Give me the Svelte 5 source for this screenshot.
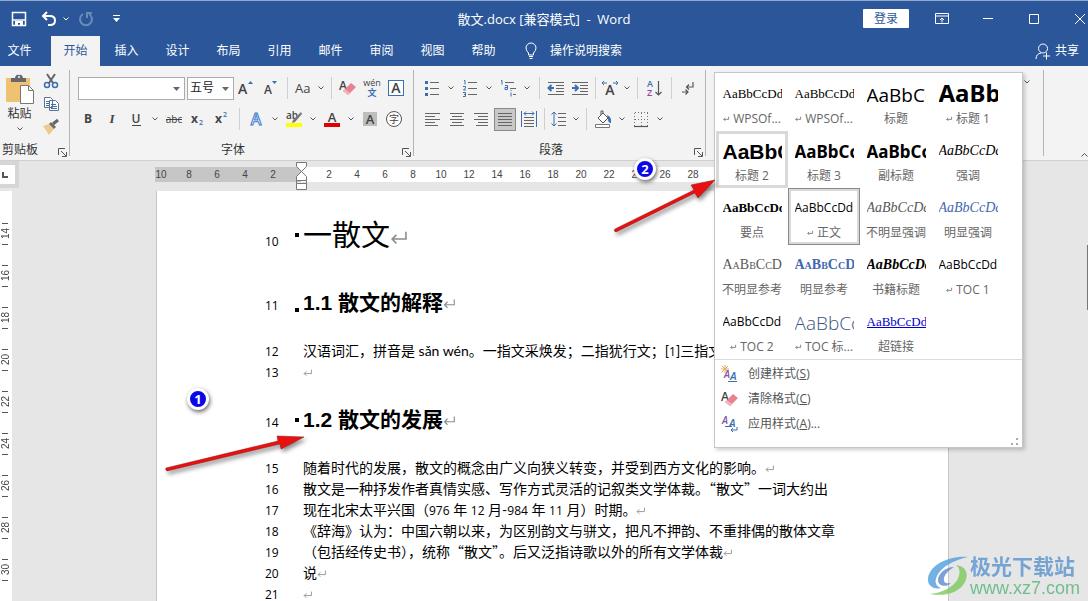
<script lang="ts">
	const tabs = ['文件', '开始', '插入', '设计', '布局', '引用', '邮件', '审阅', '视图', '帮助'];
	let activeTab = $state('开始');

	// 'v' is a drop-down arrow, 'w' a narrow one, '|' and '!' are wide and narrow dividers
	const fontTop = ['grow', 'shrink', '|', 'case', 'w', '|', 'clear', 'pinyin', 'boxed'];
	const fontBottom = ['bold', 'italic', 'underline', 'v', 'strike', 'sub', 'sup', '|', 'effects', 'v', 'highlight', 'v', 'color', 'v', 'shade', 'circled'];
	const paraTop = ['bullets', 'v', 'numbers', 'v', 'levels', 'v', '|', 'outdent', 'indent', '!', 'asian', 'w', '|', 'sort', '|', 'marks'];
	const paraBottom = ['left', 'center', 'right', 'justify', 'spread', '!', 'spacing', 'w', '|', 'fill', 'v', 'borders', 'v'];

	const titles: Record<string, string> = {
		grow: '增大字号', shrink: '减小字号', case: '更改大小写', clear: '清除格式', pinyin: '拼音指南', boxed: '字符边框',
		bold: '加粗', italic: '倾斜', underline: '下划线', strike: '删除线', sub: '下标', sup: '上标', effects: '文本效果',
		highlight: '突出显示', color: '字体颜色', shade: '字符底纹', circled: '带圈字符', bullets: '项目符号', numbers: '编号',
		levels: '多级列表', outdent: '减少缩进', indent: '增加缩进', asian: '中文版式', sort: '排序', marks: '显示编辑标记',
		left: '左对齐', center: '居中', right: '右对齐', justify: '两端对齐', spread: '分散对齐', spacing: '行距', fill: '底纹', borders: '边框',
	};

	const rulerLeft = [10, 8, 6, 4, 2];
	const rulerRight = [2, 4, 6, 8, 10, 12, 14, 16, 18, 20, 22, 24, 26, 28];
	const rulerSide = [14, 16, 18, 20, 22, 24, 26, 28, 30];

	const styles = [
		{ name: 'WPSOf...', look: 'serif', mark: true },
		{ name: 'WPSOf...', look: 'serif', mark: true },
		{ name: '标题', look: 'large' },
		{ name: '标题 1', look: 'h1', mark: true },
		{ name: '标题 2', look: 'h2', hover: true },
		{ name: '标题 3', look: 'h3' },
		{ name: '副标题', look: 'h3' },
		{ name: '强调', look: 'em' },
		{ name: '要点', look: 'strong' },
		{ name: '正文', look: 'plain', mark: true, current: true },
		{ name: '不明显强调', look: 'em soft' },
		{ name: '明显强调', look: 'em blue' },
		{ name: '不明显参考', look: 'caps soft' },
		{ name: '明显参考', look: 'caps strong blue' },
		{ name: '书籍标题', look: 'em heavy' },
		{ name: 'TOC 1', look: 'plain', mark: true },
		{ name: 'TOC 2', look: 'plain', mark: true },
		{ name: 'TOC 标...', look: 'large toc', mark: true },
		{ name: '超链接', look: 'serif link' },
	];

	const lines = [
		{ n: 10, kind: 'title', text: '一散文', mark: true },
		{ n: 11, kind: 'head low', text: '1.1 散文的解释', mark: true },
		{ n: 12, kind: 'body first', text: '汉语词汇，拼音是 sǎn wén。一指文采焕发；二指犹行文；[1]三指文', mark: false },
		{ n: 13, kind: 'body', text: '', mark: true },
		{ n: 14, kind: 'head next', text: '1.2 散文的发展', mark: true },
		{ n: 15, kind: 'body first', text: '随着时代的发展，散文的概念由广义向狭义转变，并受到西方文化的影响。', mark: true },
		{ n: 16, kind: 'body', text: '散文是一种抒发作者真情实感、写作方式灵活的记叙类文学体裁。“散文”一词大约出', mark: false },
		{ n: 17, kind: 'body', text: '现在北宋太平兴国（976 年 12 月-984 年 11 月）时期。', mark: true },
		{ n: 18, kind: 'body', text: '《辞海》认为：中国六朝以来，为区别韵文与骈文，把凡不押韵、不重排偶的散体文章', mark: false },
		{ n: 19, kind: 'body', text: '（包括经传史书），统称“散文”。后又泛指诗歌以外的所有文学体裁', mark: true },
		{ n: 20, kind: 'body', text: '说', mark: true },
		{ n: 21, kind: 'body', text: '', mark: true },
	];

	// digits and quotes are set in their own faces; they land on the odd indexes
	const runs = (text: string) => text.split(/([0-9]+|[“”])/);
</script>

{#snippet ret()}
	<svg class="ret" viewBox="0 0 16 14" aria-hidden="true"><path d="M15 1v7H2M6 4 2 8l4 4" /></svg>
{/snippet}

{#snippet chev()}
	<svg class="chev" width="6" height="4" viewBox="0 0 6 4" aria-hidden="true"><path d="M.5.5 3 3 5.5.5" /></svg>
{/snippet}

{#snippet eraser()}
	<text x="0" y="11" class="ui semi" font-size="12">A</text>
	<path d="m4 12 8-8 5 4-8 8z" fill="#e6818f" />
	<path d="m4 12 2-2 5 4-2 2z" fill="#f3b3bb" />
{/snippet}

{#snippet launcher(label: string)}
	<button class="launcher" title={label} aria-label={label}>
		<svg width="9" height="9" viewBox="0 0 9 9"><path d="M.5 7V.5H7M3 3l5 5M8.500 4v4.500H4" fill="none" stroke="#555" /></svg>
	</button>
{/snippet}

{#snippet glyph(name: string)}
	<svg width="18" height="18" viewBox="0 0 18 18" aria-hidden="true">
		{#if name === 'grow'}
			<text x="1" y="15" class="ui semi" font-size="14">A</text><path d="m11 5 2.500-3L16 5z" fill="#3b6fb0" />
		{:else if name === 'shrink'}
			<text x="3" y="15" class="ui semi" font-size="12">A</text><path d="m11 2 2.500 3L16 2z" fill="#3b6fb0" />
		{:else if name === 'case'}
			<text x="0" y="14" class="ui" font-size="13">Aa</text>
		{:else if name === 'clear'}
			{@render eraser()}
		{:else if name === 'pinyin'}
			<text x="9" y="7" class="ui" font-size="9" text-anchor="middle">wén</text>
			<text x="9" y="17" class="blue-ink" font-size="9" text-anchor="middle">文</text>
		{:else if name === 'boxed'}
			<rect x="1.500" y="1.500" width="15" height="15" fill="#fff" stroke="#3b6fb0" /><text x="9" y="14" class="ui semi" font-size="14" text-anchor="middle">A</text>
		{:else if name === 'bold'}
			<text x="9" y="13" class="ui heavy" font-size="12" text-anchor="middle">B</text>
		{:else if name === 'italic'}
			<text x="9" y="13" class="slant" font-size="13" text-anchor="middle">I</text>
		{:else if name === 'underline'}
			<text x="9" y="13" class="ui semi" font-size="12" text-anchor="middle">U</text><path d="M5 15.500h9" stroke="#444" />
		{:else if name === 'strike'}
			<text x="9" y="13" class="ui" font-size="10" text-anchor="middle">abc</text><path d="M1 9.500h16" stroke="#444" />
		{:else if name === 'sub'}
			<text x="2" y="13" class="ui heavy" font-size="12">x</text><text x="10" y="15" class="blue-ink" font-size="7">2</text>
		{:else if name === 'sup'}
			<text x="2" y="13" class="ui heavy" font-size="12">x</text><text x="10" y="7" class="blue-ink" font-size="7">2</text>
		{:else if name === 'effects'}
			<text x="9" y="15" font-size="16" text-anchor="middle" class="glow">A</text>
		{:else if name === 'highlight'}
			<text x="1" y="9" class="ui semi" font-size="10">ab</text>
			<path d="m16 2 1 2-7 8-3 1 1-3z" fill="#777" /><path d="M1 13h16v4H1z" fill="#ff0" />
		{:else if name === 'color'}
			<text x="9" y="12" class="ui semi" font-size="13" text-anchor="middle">A</text><path d="M1 13h16v4H1z" fill="#e00000" />
		{:else if name === 'shade'}
			<path d="M2 2h14v14H2z" fill="#bdbdbd" /><text x="9" y="14" class="ui semi" font-size="13" text-anchor="middle">A</text>
		{:else if name === 'circled'}
			<circle cx="9" cy="9" r="7.500" fill="#fff" stroke="#555" /><text x="9" y="13" class="ui" font-size="10" text-anchor="middle">字</text>
		{:else if name === 'bullets'}
			<path d="M2 2h3v3H2zM2 8h3v3H2zM2 14h3v3H2z" fill="#3b6fb0" /><path d="M7 3.500h9M7 9.500h9M7 15.500h9" class="bar" />
		{:else if name === 'numbers'}
			<path d="M3 1.500h1v4M2 7.500h2.500v1.500l-2 2H5M2 13.500h2.500v4H2M3 15.500h1.500" class="blue" /><path d="M7 3.500h9M7 9.500h9M7 15.500h9" class="bar" />
		{:else if name === 'levels'}
			<path d="M2 1.500h1v4M6 6.500h2.500v4H6v-2h2M12 11v1M12 13.500v4" class="blue" /><path d="M6 3.500h9M11 9.500h6M14 15.500h3" class="bar" />
		{:else if name === 'outdent' || name === 'indent'}
			<path d="M1 3.500h16M9 6.500h8M9 9.500h8M9 12.500h8M1 15.500h16" class="bar" />
			{#if name === 'outdent'}
				<path d="M7 9H2M4.500 6 1.500 9l3 3" class="blue thick" />
			{:else}
				<path d="M1 9h5M4 6l3 3-3 3" class="blue thick" />
			{/if}
		{:else if name === 'asian'}
			<text x="9" y="16" class="ui semi" font-size="14" text-anchor="middle">A</text><path d="M6 4H1M3 2 1 4l2 2M12 4h5M15 2l2 2-2 2" class="blue" />
		{:else if name === 'sort'}
			<text x="2" y="8" class="blue-ink" font-size="9">A</text><text x="2" y="17" class="violet" font-size="9">Z</text><path d="M13.500 2v14M10.500 13l3 3 3-3" class="dark" />
		{:else if name === 'marks'}
			<path d="M14 3v5H8M10 5.500 7.500 8l2.500 2.500M3 13h6M6.500 10.500 9 13l-2.500 2.500" class="dark" />
		{:else if name === 'left'}
			<path d="M1 3.500h15M1 6.500h10M1 9.500h15M1 12.500h10M1 15.500h13" class="bar" />
		{:else if name === 'center'}
			<path d="M2 3.500h14M4 6.500h10M2 9.500h14M4 12.500h10M2 15.500h14" class="bar" />
		{:else if name === 'right'}
			<path d="M2 3.500h14M6 6.500h10M2 9.500h14M6 12.500h10M4 15.500h12" class="bar" />
		{:else if name === 'justify'}
			<path d="M2 3.500h14M2 6.500h14M2 9.500h14M2 12.500h14M2 15.500h14" class="bar" />
		{:else if name === 'spread'}
			<path d="M1.500 1v16M16.500 1v16" class="blue" /><path d="M4 7.500h10M4 10.500h10M4 13.500h10M4 16.500h10" class="bar" /><path d="M4 3.500h10M6 1.500l-2 2 2 2M12 1.500l2 2-2 2" class="blue" />
		{:else if name === 'spacing'}
			<path d="M4 2v14M1.500 4.500 4 2l2.500 2.500M1.500 13.500 4 16l2.500-2.500" class="blue" /><path d="M8 3.500h8M8 7.500h8M8 11.500h8M8 15.500h8" class="bar" />
		{:else if name === 'fill'}
			<path d="m4 8 5-5 5 5-5 5zM9 3V1H7v4" fill="#fff" stroke="#555" /><path d="M13 5q5 2 4 8-3 0-3-4z" fill="#3b6fb0" /><path d="M1.500 14.500h14v3h-14z" fill="#fff" stroke="#777" />
		{:else if name === 'borders'}
			<path d="M2.500 3v13M9.500 3v13M15.500 3v13M3 2.500h13M3 9.500h13" stroke="#777" stroke-dasharray="1 2" /><path d="M2 16.500h14" class="dark" />
		{/if}
	</svg>
{/snippet}

{#snippet tools(list: string[])}
	{#each list as t}
		{#if t === '|' || t === '!'}
			<span class="sep" class:slim={t === '!'}></span>
		{:else if t === 'v' || t === 'w'}
			<button class="drop" class:slim={t === 'w'} aria-label="更多选项">{@render chev()}</button>
		{:else}
			<button class="tool" class:on={t === 'justify'} title={titles[t]} aria-label={titles[t]}>{@render glyph(t)}</button>
		{/if}
	{/each}
{/snippet}

<div class="window">
	<header class="titlebar">
		<div class="quick">
			<button aria-label="保存">
				<svg width="16" height="16" viewBox="0 0 16 16"><path d="M1.500 1.500h13v13h-13zM2 9h12" fill="none" stroke="#fff" stroke-width="1.500" /><path d="M4 10h8v5H9v-3H7v3H4z" fill="#fff" /></svg>
			</button>
			<button aria-label="撤消">
				<svg width="16" height="16" viewBox="0 0 16 16"><path d="M2 5h7q5 0 5 4.500T9 14H7M6 1 2 5l4 4" fill="none" stroke="#fff" stroke-width="2" /></svg>
			</button>
			<button class="narrow" aria-label="撤消列表">{@render chev()}</button>
			<button class="redo" aria-label="恢复">
				<svg width="16" height="16" viewBox="0 0 16 16"><path d="M5 3a6 6 0 1 0 6 0M9 7V2h5" fill="none" stroke="#fff" stroke-width="2" /></svg>
			</button>
			<button class="custom" aria-label="自定义快速访问工具栏">
				<svg width="7" height="8" viewBox="0 0 7 8"><path d="M0 0h7v1H0zM0 3h7L3.500 7z" fill="#fff" /></svg>
			</button>
		</div>
		<div class="doc-name">散文.docx [兼容模式] &nbsp;- &nbsp;Word</div>
		<div class="win-tools">
			<button class="login">登录</button>
			<button class="win" aria-label="功能区显示选项"><svg width="14" height="12" viewBox="0 0 14 12"><path d="M.5.5h13v10H.5zM.5 3h13M7 9.500V5M5 7l2-2 2 2" /></svg></button>
			<button class="win" aria-label="最小化"><svg width="12" height="12" viewBox="0 0 12 12"><path d="M1 5.500h10" /></svg></button>
			<button class="win" aria-label="最大化"><svg width="12" height="12" viewBox="0 0 12 12"><path d="M1.500 1.500h9v9h-9z" /></svg></button>
			<button class="win close" aria-label="关闭"><svg width="12" height="12" viewBox="0 0 12 12"><path d="m1 1 10 10M11 1 1 11" /></svg></button>
		</div>
	</header>

	<nav class="tabs">
		{#each tabs as tab}
			<button class="tab" class:active={tab === activeTab} onclick={() => (activeTab = tab)}>{tab}</button>
		{/each}
		<button class="tell">
			<svg width="14" height="18" viewBox="0 0 14 18"><path d="M4.500 13v-2Q2 8.500 2 6a5 5 0 0 1 10 0q0 2.500-2.500 5v2zM5 14.500h4M5.500 16.500h3" fill="none" stroke="#fff" /></svg>
			操作说明搜索
		</button>
		<button class="share">
			<svg width="16" height="17" viewBox="0 0 16 17"><circle cx="8" cy="5.500" r="4.500" /><path d="M1 16q0-5 5-6M8 13h7M11.500 9.500v7" /></svg>
			共享
		</button>
	</nav>

	<section class="ribbon">
		<div class="group clip">
			<div class="clip-tools">
				<button class="paste">
					<svg width="30" height="31" viewBox="0 0 30 31"><path d="M1 4h24v24H1z" fill="#efc26f" /><path d="M6 8V4h4q1-4 4-3 3-1 4 3h3v4z" fill="#68686c" /><circle cx="14" cy="3" r="1" fill="#fff" /><path d="M15.500 11.500h8l5 5v13h-13z" fill="#fff" stroke="#777" /><path d="M23.500 11.500v5h5" fill="none" stroke="#777" /></svg>
					<span>粘贴</span>
					{@render chev()}
				</button>
				<div class="clip-side">
					<button aria-label="剪切"><svg width="16" height="16" viewBox="0 0 16 16"><path d="m4 1 6 9M12 1 6 10" fill="none" stroke="#666" stroke-width="2" /><g fill="none" stroke="#3b6fb0" stroke-width="1.500"><circle cx="4" cy="12" r="2.500" /><circle cx="12" cy="12" r="2.500" /></g></svg></button>
					<button aria-label="复制"><svg width="16" height="16" viewBox="0 0 16 16"><path d="M1.500 1.500h6l2 2v8h-8zM6.500 4.500h6l3 3v7h-9z" fill="#fff" stroke="#5f7391" /><path d="M3 5.500h3M3 7.500h3M3 9.500h3M8 8.500h5M8 10.500h6M8 12.500h6" stroke="#3b6fb0" /></svg></button>
					<button aria-label="格式刷"><svg width="16" height="16" viewBox="0 0 16 16"><path d="m0 7 6-2 5 5-5 6z" fill="#efc98c" /><path d="m6 5 2-2 5 5-2 2z" fill="#6b6b6b" /><path d="m10 5 5-4" stroke="#666" stroke-width="3" /></svg></button>
				</div>
			</div>
			<div class="caption"><span>剪贴板</span>{@render launcher('剪贴板')}</div>
		</div>

		<div class="group font">
			<div class="row">
				<label class="combo wide">
					<select aria-label="字体"><option></option></select>
					<svg width="7" height="4" viewBox="0 0 7 4"><path d="M0 0h7L3.500 4z" fill="#666" /></svg>
				</label>
				<label class="combo">
					<select aria-label="字号"><option>五号</option></select>
					<svg width="7" height="4" viewBox="0 0 7 4"><path d="M0 0h7L3.500 4z" fill="#666" /></svg>
				</label>
				{@render tools(fontTop)}
			</div>
			<div class="row">{@render tools(fontBottom)}</div>
			<div class="caption"><span>字体</span>{@render launcher('字体')}</div>
		</div>

		<div class="group para">
			<div class="row">{@render tools(paraTop)}</div>
			<div class="row">{@render tools(paraBottom)}</div>
			<div class="caption"><span>段落</span>{@render launcher('段落')}</div>
		</div>

		<div class="group more">
			<button class="drop" aria-label="编辑">{@render chev()}</button>
		</div>
		<button class="collapse" aria-label="折叠功能区"><svg width="7" height="5" viewBox="0 0 7 5"><path d="m.5 4.500 3-3 3 3" fill="none" stroke="#555" /></svg></button>
	</section>

	<div class="ruler">
		<button class="tabstop" aria-label="制表符"><svg width="6" height="6" viewBox="0 0 6 6"><path d="M1 0v5h5" fill="none" stroke="#555" stroke-width="2" /></svg></button>
		<div class="scale">
			<div class="margin">{#each rulerLeft as n}<span>{n}</span>{/each}</div>
			<div class="measure">{#each rulerRight as n}<span>{n}</span>{/each}</div>
			<svg class="stops" width="13" height="29" viewBox="0 0 13 29"><path d="M1.500.500h10v4l-5 5-5-5zM1.500 18.500v-4l5-5 5 5v4zM1.500 21.500h10v6h-10zM1.500 18.500v3M11.500 18.500v3" fill="#fff" stroke="#777" /></svg>
		</div>
	</div>

	<main class="work">
		<div class="side-ruler">
			{#each rulerSide as n}<div class="mark"><span>{n}</span></div>{/each}
		</div>
		<article class="page">
			{#each lines as l}
				<div class="line {l.kind}">
					<span class="num">{l.n}</span>
					<span class="dot"></span>
					<span class="text">{#each runs(l.text) as r, i}{#if i % 2}<span class={/\d/.test(r) ? 'digits' : 'quote'}>{r}</span>{:else}{r}{/if}{/each}{#if l.mark}{@render ret()}{/if}</span>
				</div>
			{/each}
		</article>
		<div class="scroll"></div>
	</main>

	<aside class="gallery">
		<div class="styles">
			{#each styles as s}
				<button class="style" class:hover={s.hover} class:current={s.current}>
					<span class="preview {s.look}">AaBbCcDd</span>
					<span class="name">{#if s.mark}{@render ret()}{/if}{s.name}</span>
				</button>
			{/each}
		</div>
		<div class="menu">
			<button>
				<svg width="18" height="18" viewBox="0 0 18 18"><path d="M4 0v8M0 4h8M1 1l6 6M7 1 1 7" stroke="#e9a85a" /><text x="3" y="13" class="purple" font-size="10">A</text><text x="9" y="15" class="blue-ink slanted" font-size="11">A</text><path d="M7 16.500h9" class="blue" /></svg>
				<span>创建样式(<u>S</u>)</span>
			</button>
			<button>
				<svg width="18" height="18" viewBox="0 0 18 18">{@render eraser()}</svg>
				<span>清除格式(<u>C</u>)</span>
			</button>
			<button>
				<svg width="18" height="18" viewBox="0 0 18 18"><text x="1" y="9" class="purple" font-size="10">A</text><text x="8" y="12" class="blue-ink slanted" font-size="11">A</text><path d="M4 11.500h7M16 12v3h-6M12 13l-2 2 2 2" class="blue" /></svg>
				<span>应用样式(<u>A</u>)...</span>
			</button>
		</div>
		<svg class="grip" width="8" height="8" viewBox="0 0 8 8"><path d="M6 0h2v2H6zM6 5h2v2H6zM1 5h2v2H1z" fill="#aaa" /></svg>
	</aside>

	<svg class="arrow one" width="144" height="50" viewBox="0 0 144 50" aria-hidden="true"><path d="M2 37 114 10l-1-5 27 1-23 12-1-5L3 40q-2-1-1-3z" /></svg>
	<svg class="arrow two" width="110" height="64" viewBox="0 0 110 64" aria-hidden="true"><path d="m3 53 79-39-3-5 24-5-17 18-3-5L4 56q-3-1-1-3z" /></svg>
	<span class="badge one">1</span>
	<span class="badge two">2</span>

	<div class="watermark">
		<svg width="44" height="42" viewBox="0 0 44 42" aria-hidden="true">
			<path d="M42 2C24 0 2 10 2 25c0 6 6 10 13 8-5-2-7-6-4-12C15 12 28 5 42 2z" fill="#4f9fdd" />
			<path d="M28 12c-9 0-16 7-16 13s8 8 13 3c-4 1-8 0-7-5 1-4 5-8 10-11z" fill="#5f88cf" />
			<path d="M30 10c6 4 4 14-3 20-6 5-14 8-23 9 16 3 30-2 35-12 4-8 1-16-9-17z" fill="#7cc95c" />
		</svg>
		<div><strong>极光下载站</strong><span>www.xz7.com</span></div>
	</div>
</div>

<style>
	:global(body) { overflow: hidden; background: #e6e6e6; }
	.window { --blue: #2b579a; --line: #c6c6c6; position: relative; display: flex; flex-direction: column; height: 100vh; overflow: hidden; font: 12px/16px "Open Sans", "Noto Sans CJK SC", sans-serif; color: #333; }
	button { display: flex; align-items: center; justify-content: center; margin: 0; padding: 0; border: 0; background: none; color: inherit; font: inherit; flex: none; }
	svg { flex: none; overflow: visible; }

	/* title bar */
	.titlebar { display: grid; grid-template-columns: 1fr auto 1fr; align-items: center; flex: none; height: 35px; border-top: 1px solid #8fa9cf; background: var(--blue); color: #fff; }
	.doc-name { font-size: 13px; }
	.quick { display: flex; align-items: center; padding-left: 4px; }
	.quick button { width: 30px; height: 30px; }
	.quick .narrow { width: 4px; }
	.quick .redo { width: 36px; opacity: .3; }
	.quick .custom { width: 24px; }
	.win-tools { display: flex; align-items: center; justify-content: flex-end; }
	.login { width: 46px; height: 19px; margin-right: 10px; background: #fff; color: var(--blue); border-radius: 1px; }
	.win { width: 46px; height: 30px; }
	.close { width: 31px; justify-content: flex-end; padding-right: 2px; }
	.win svg { fill: none; stroke: #fff; }
	.chev { fill: none; stroke: #555; }
	.quick .chev { stroke: #fff; }

	/* tabs */
	.tabs { display: flex; gap: 2px; flex: none; height: 30px; background: var(--blue); color: #fff; }
	.tab { width: 49px; }
	.tab:first-child { padding-right: 11px; box-sizing: border-box; padding-left: 1px; }
	.tab.active { background: #f3f3f3; color: var(--blue); }
	.tell { gap: 12px; margin-left: 14px; }
	.share { gap: 4px; margin-left: auto; padding-right: 9px; }
	.share svg { fill: none; stroke: #fff; }

	/* ribbon */
	.ribbon { display: flex; flex: none; height: 94px; background: #f3f3f3; border-bottom: 1px solid #d0d0d0; }
	.group { position: relative; display: flex; flex-direction: column; box-sizing: border-box; flex: none; padding-top: 10px; gap: 7px; }
	.group::after { content: ""; position: absolute; right: 0; top: 4px; bottom: 4px; border-right: 1px solid #b5b5b5; }
	.group.clip { width: 70px; padding-top: 3px; gap: 0; }
	.group.font { width: 344px; }
	.group.para { width: 292px; }
	.group.more { flex: 1; align-items: flex-end; padding: 4px 10px 0; }
	.row { display: flex; align-items: center; height: 24px; padding-left: 6px; }
	.font .row:first-child { padding-left: 8px; }
	.para .row:nth-child(2) { padding-left: 7px; }
	.caption { display: flex; align-items: center; height: 20px; margin-top: auto; }
	.caption span { flex: 1; padding-right: 2px; text-align: center; }
	.clip .caption span { padding-left: 2px; text-align: left; }
	.launcher { width: 16px; height: 16px; margin-top: 4px; }
	.tool { width: 24px; height: 24px; }
	.tool.on { width: 22px; height: 23px; margin: 0 1px; box-sizing: border-box; background: #c8c8c8; border: 1px solid #8a8a8a; }
	.drop { width: 14px; height: 24px; }
	.drop.slim { width: 10px; }
	.sep { width: 10px; height: 22px; flex: none; background: linear-gradient(#cfcfcf, #cfcfcf) center / 1px 100% no-repeat; }
	.sep.slim { width: 6px; }
	.clip-tools { display: flex; }
	.paste { flex-direction: column; justify-content: flex-start; width: 39px; padding-top: 5px; }
	.paste span { margin: 1px 0 5px; }
	.clip-side button { width: 24px; height: 23px; }
	.combo { position: relative; display: flex; width: 47px; height: 23px; box-sizing: border-box; border: 1px solid #ababab; background: #fff; }
	.combo.wide { width: 107px; margin-right: 2px; }
	.combo select { appearance: none; width: 100%; margin: 0; padding: 0 2px; border: 0; background: none; color: #222; font: inherit; }
	.combo svg { position: absolute; right: 4px; top: 9px; pointer-events: none; }
	.collapse { align-self: flex-end; justify-content: flex-end; width: 44px; height: 12px; }

	/* ink inside tool glyphs */
	.ui { fill: #444; }
	.semi { font-weight: 600; }
	.heavy { font-weight: 700; }
	.slant { fill: #444; font-family: "Liberation Serif", serif; font-style: italic; font-weight: 700; }
	.blue-ink { fill: #3b6fb0; font-weight: 600; }
	.purple { fill: #8055a5; font-weight: 600; font-style: italic; }
	.violet { fill: #8a4aa8; font-weight: 600; }
	.slanted { font-style: italic; }
	.glow { fill: #fff; stroke: #3b7cc9; font-weight: 600; }
	.bar { fill: none; stroke: #666; }
	.dark { fill: none; stroke: #555; stroke-width: 1.2; }
	.blue { fill: none; stroke: #3b6fb0; }
	.thick { stroke-width: 2; }

	/* rulers */
	.ruler { display: flex; flex: none; height: 30px; background: #e6e6e6; font: 10px/15px "Liberation Sans", sans-serif; color: #444; }
	.tabstop { width: 19px; height: 27px; padding-right: 6px; box-sizing: border-box; background: #fff; border: solid #d6d6d6; border-width: 4px 4px 4px 0; }
	.scale { position: relative; display: flex; flex: 1; height: 15px; margin: 6px 140px 0 136px; background: #fff; }
	.margin { display: flex; box-sizing: border-box; width: 146px; background: #c6c6c6; }
	.measure { display: flex; padding-left: 14px; }
	.scale span { flex: none; width: 28px; text-align: center; }
	.margin span:first-child { margin-left: -8px; }
	.stops { position: absolute; left: 140px; top: -5px; }
	.work { display: flex; flex: 1; min-height: 0; overflow: hidden; background: #e6e6e6; }
	.side-ruler { width: 12px; padding-top: 32px; background: #fff; flex: none; font: 10px/12px "Liberation Sans", sans-serif; color: #444; }
	.mark { height: 42px; background: linear-gradient(#555, #555) 2px 0 / 6px 1px no-repeat, linear-gradient(#555, #555) 2px 21px / 6px 1px no-repeat; }
	.mark span { display: block; height: 21px; width: 10px; text-align: center; writing-mode: vertical-rl; transform: rotate(180deg); }

	/* page */
	.page { flex: 1; margin: 0 0 0 144px; padding: 24px 0 0 108px; border-left: 1px solid var(--line); border-right: 1px solid var(--line); background: #fff; color: #000; }
	.scroll { width: 1px; margin: 54px 0 0 138px; height: 65px; background: #777; }
	.line { display: flex; align-items: baseline; height: 21px; white-space: nowrap; font: 14px/21px Lato, "Noto Sans CJK SC", sans-serif; }
	.num { width: 14px; font: 12px "Open Sans", sans-serif; }
	.dot { align-self: center; width: 4px; height: 4px; margin: 0 4px 0 16px; }
	.title .dot, .head .dot { background: #000; }
	.body .digits { font: 12px "Open Sans", sans-serif; }
	.body .quote { font-family: "Noto Sans CJK SC", sans-serif; }
	.line .ret { width: 9px; height: 8px; }
	.line.title { height: 40px; font-size: 29px; line-height: 40px; }
	.title .ret { width: 17px; height: 16px; }
	.line.head { height: 30px; margin-top: 33px; font: bold 21px/30px "Liberation Sans", "Noto Sans CJK SC", sans-serif; }
	.line.next { margin-top: 23px; }
	.head .ret { width: 12px; height: 12px; }
	.head.low .dot { align-self: flex-end; margin-bottom: 6px; }
	.body.first { margin-top: 22px; }
	.ret { fill: none; stroke: #8c8c8c; stroke-width: 1.5; }

	/* style gallery */
	.gallery { position: absolute; left: 714px; top: 72px; width: 309px; box-sizing: border-box; padding-top: 1px; border: 1px solid var(--line); background: #fff; box-shadow: 2px 2px 4px rgba(0, 0, 0, .2); }
	.styles { display: grid; grid-template-columns: repeat(4, 72px); grid-auto-rows: 57px; padding-left: 1px; border-bottom: 1px solid #d8dce2; }
	.style { flex-direction: column; justify-content: flex-start; box-sizing: border-box; padding: 5px 3px 0; border: 3px solid transparent; color: #666; }
	.style.hover { border-color: #d9d9d9; }
	.style.current { border-color: #d9d9d9; outline: 1px solid #8a8a8a; outline-offset: -1px; }
	.name { display: flex; align-items: center; justify-content: center; gap: 4px; height: 16px; white-space: nowrap; }
	.name .ret { width: 6px; height: 6px; stroke: #666; stroke-width: 2; }
	.preview { width: 59px; height: 29px; overflow: hidden; text-align: left; white-space: nowrap; color: #000; font: 13px/24px "Liberation Serif", serif; }
	.preview.large { font: 19px/26px "Open Sans", sans-serif; }
	.preview.h1 { font: bold 24px/22px "Noto Sans", sans-serif; }
	.preview.h2 { font: bold 21px/26px "Liberation Sans", sans-serif; }
	.preview.h3 { font: bold 17px/26px "Noto Sans", sans-serif; }
	.preview.plain { font: 12px/24px "Open Sans", sans-serif; }
	.preview.em { font-size: 14px; font-style: italic; }
	.preview.heavy { font-weight: bold; }
	.preview.strong { font-weight: bold; }
	.preview.caps { font-size: 14px; font-variant: small-caps; }
	.preview.soft { color: #595959; }
	.preview.blue { color: #4468b0; }
	.preview.toc { color: #3b5580; font-weight: 300; }
	.preview.link { color: #0000d0; text-decoration: underline; }
	.menu { padding: 1px 0 11px; color: #555; }
	.menu button { width: 100%; height: 25px; justify-content: flex-start; gap: 9px; padding-left: 6px; }
	.grip { position: absolute; right: 4px; bottom: 1px; }

	/* callouts */
	.arrow { position: absolute; fill: #e81010; stroke: #8f1414; stroke-width: .5; filter: drop-shadow(2px 3px 2px rgba(0, 0, 0, .45)); }
	.arrow.one { left: 164px; top: 431px; }
	.arrow.two { left: 612px; top: 176px; }
	.badge { position: absolute; width: 16px; height: 16px; border: 3px solid #fff; border-radius: 50%; background: #0808e8; color: #fff; font: bold 13px/16px "Noto Sans", sans-serif; text-align: center; box-shadow: 1px 2px 4px rgba(0, 0, 0, .6); }
	.badge.one { left: 187px; top: 388px; }
	.badge.two { left: 634px; top: 158px; }
	.watermark { position: absolute; right: 8px; bottom: 3px; display: flex; align-items: center; opacity: .8; }
	.watermark div { display: flex; flex-direction: column; }
	.watermark strong { color: #5a94cf; font-size: 21px; line-height: 24px; }
	.watermark span { color: #55b37a; font: 18px/20px "Liberation Sans", sans-serif; }
</style>
